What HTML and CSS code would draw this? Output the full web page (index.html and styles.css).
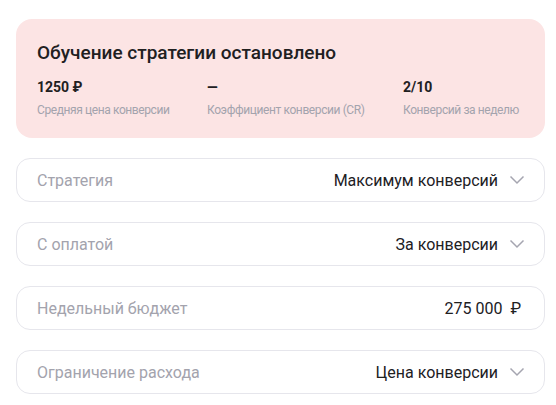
FILE: index.html
```html
<!DOCTYPE html>
<html lang="ru">
<head>
<meta charset="utf-8">
<link rel="stylesheet" href="styles.css">
</head>
<body>
<div class="page">
  <section class="alert">
    <h1 class="alert-title">Обучение стратегии остановлено</h1>
    <div class="stats">
      <div class="stat s1">
        <div class="stat-value">1250 ₽</div>
        <div class="stat-label">Средняя цена конверсии</div>
      </div>
      <div class="stat s2">
        <div class="stat-value">—</div>
        <div class="stat-label">Коэффициент конверсии (CR)</div>
      </div>
      <div class="stat s3">
        <div class="stat-value">2/10</div>
        <div class="stat-label">Конверсий за неделю</div>
      </div>
    </div>
  </section>

  <div class="field">
    <span class="field-label">Стратегия</span>
    <span class="field-value">Максимум конверсий</span>
    <svg class="chev" width="16" height="10" viewBox="0 0 16 10"><path d="M1.5 1.5 L8 8 L14.5 1.5" fill="none" stroke="#a5a5b0" stroke-width="1.5"/></svg>
  </div>
  <div class="field">
    <span class="field-label">С оплатой</span>
    <span class="field-value">За конверсии</span>
    <svg class="chev" width="16" height="10" viewBox="0 0 16 10"><path d="M1.5 1.5 L8 8 L14.5 1.5" fill="none" stroke="#a5a5b0" stroke-width="1.5"/></svg>
  </div>
  <div class="field">
    <span class="field-label">Недельный бюджет</span>
    <span class="field-value money">275 000 <span class="rub">₽</span></span>
  </div>
  <div class="field">
    <span class="field-label">Ограничение расхода</span>
    <span class="field-value">Цена конверсии</span>
    <svg class="chev" width="16" height="10" viewBox="0 0 16 10"><path d="M1.5 1.5 L8 8 L14.5 1.5" fill="none" stroke="#a5a5b0" stroke-width="1.5"/></svg>
  </div>
</div>
</body>
</html>
```
FILE: styles.css
```css
html, body {
  margin: 0;
  padding: 0;
  background: #ffffff;
}
body {
  font-family: Roboto, "Noto Sans", "Liberation Sans", sans-serif;
  color: #21201f;
}
.page {
  width: 529px;
  padding: 19px 0 0 16px;
  display: flex;
  flex-direction: column;
  gap: 20px;
}
.alert {
  background: #fce4e4;
  border-radius: 16px;
  padding: 22px 20px 20px 21px;
  height: 119px;
  box-sizing: border-box;
}
.alert-title {
  margin: 0;
  font-size: 19px;
  font-weight: 500;
  line-height: 24px;
}
.stats {
  display: flex;
  margin-top: 13px;
}
.stat-value {
  font-size: 14px;
  font-weight: 700;
  line-height: 18px;
}
.stat-label {
  margin-top: 6px;
  font-size: 12px;
  letter-spacing: -0.4px;
  line-height: 16px;
  color: #a3a3ad;
  white-space: nowrap;
}
.s1 { width: 170px; }
.s2 { width: 196px; }
.field {
  height: 44px;
  box-sizing: border-box;
  border: 1px solid #e6e6ec;
  border-radius: 14px;
  display: flex;
  align-items: center;
  padding: 0 19px 0 20px;
}
.field-label {
  flex: 1;
  font-size: 16px;
  color: #a3a3ad;
}
.field-value {
  font-size: 16px;
  color: #21201f;
}
.chev {
  margin-left: 11px;
  display: block;
}
.money {
  margin-right: 4px;
}
.rub {
  margin-left: 4px;
}
```
